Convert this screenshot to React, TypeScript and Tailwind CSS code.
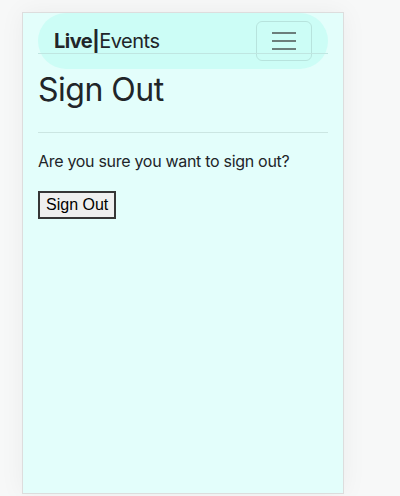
export default function App() {
  return (
    <div className="min-h-[496px] w-[400px] bg-[#f7f8f8] pt-[12px] font-['Inter',sans-serif] text-[#212529]">
      <div className="ml-[22px] h-[482px] w-[322px] border border-[#dddddd] bg-[#e3fefb] shadow-[0_0_24px_rgba(0,0,0,0.05)]">
        <nav className="relative mx-[15px] flex h-[56px] items-center justify-between rounded-full bg-[#ccfdf6] pl-[16px] pr-[16px]">
          <a className="text-[20px] leading-[30px] tracking-[-0.5px]">
            <span className="font-bold">Live|</span>
            <span>Events</span>
          </a>
          <button className="flex h-[40px] w-[56px] flex-col items-center justify-center gap-[6px] rounded-[6px] border border-[rgba(0,0,0,0.1)]">
            <span className="block h-[2px] w-[24px] bg-[#6b7e7b]" />
            <span className="block h-[2px] w-[24px] bg-[#6b7e7b]" />
            <span className="block h-[2px] w-[24px] bg-[#6b7e7b]" />
          </button>
          <div className="absolute left-0 right-0 top-[40px] h-px bg-[#bfe6e1]" />
        </nav>
        <main className="px-[15px]">
          <h1 className="mt-[2px] text-[32px] font-normal leading-[38px] tracking-[-0.5px]">Sign Out</h1>
          <hr className="mb-[16px] mt-[23px] border-t border-[#cbe6e2]" />
          <p className="text-[16px] leading-[24px] tracking-[-0.3px]">Are you sure you want to sign out?</p>
          <button className="mt-[18px] border-2 border-[#363636] bg-[#efefef] px-[6px] py-[2px] font-['Liberation_Sans',sans-serif] text-[16px] leading-[20px] text-black">
            Sign Out
          </button>
        </main>
      </div>
    </div>
  );
}
